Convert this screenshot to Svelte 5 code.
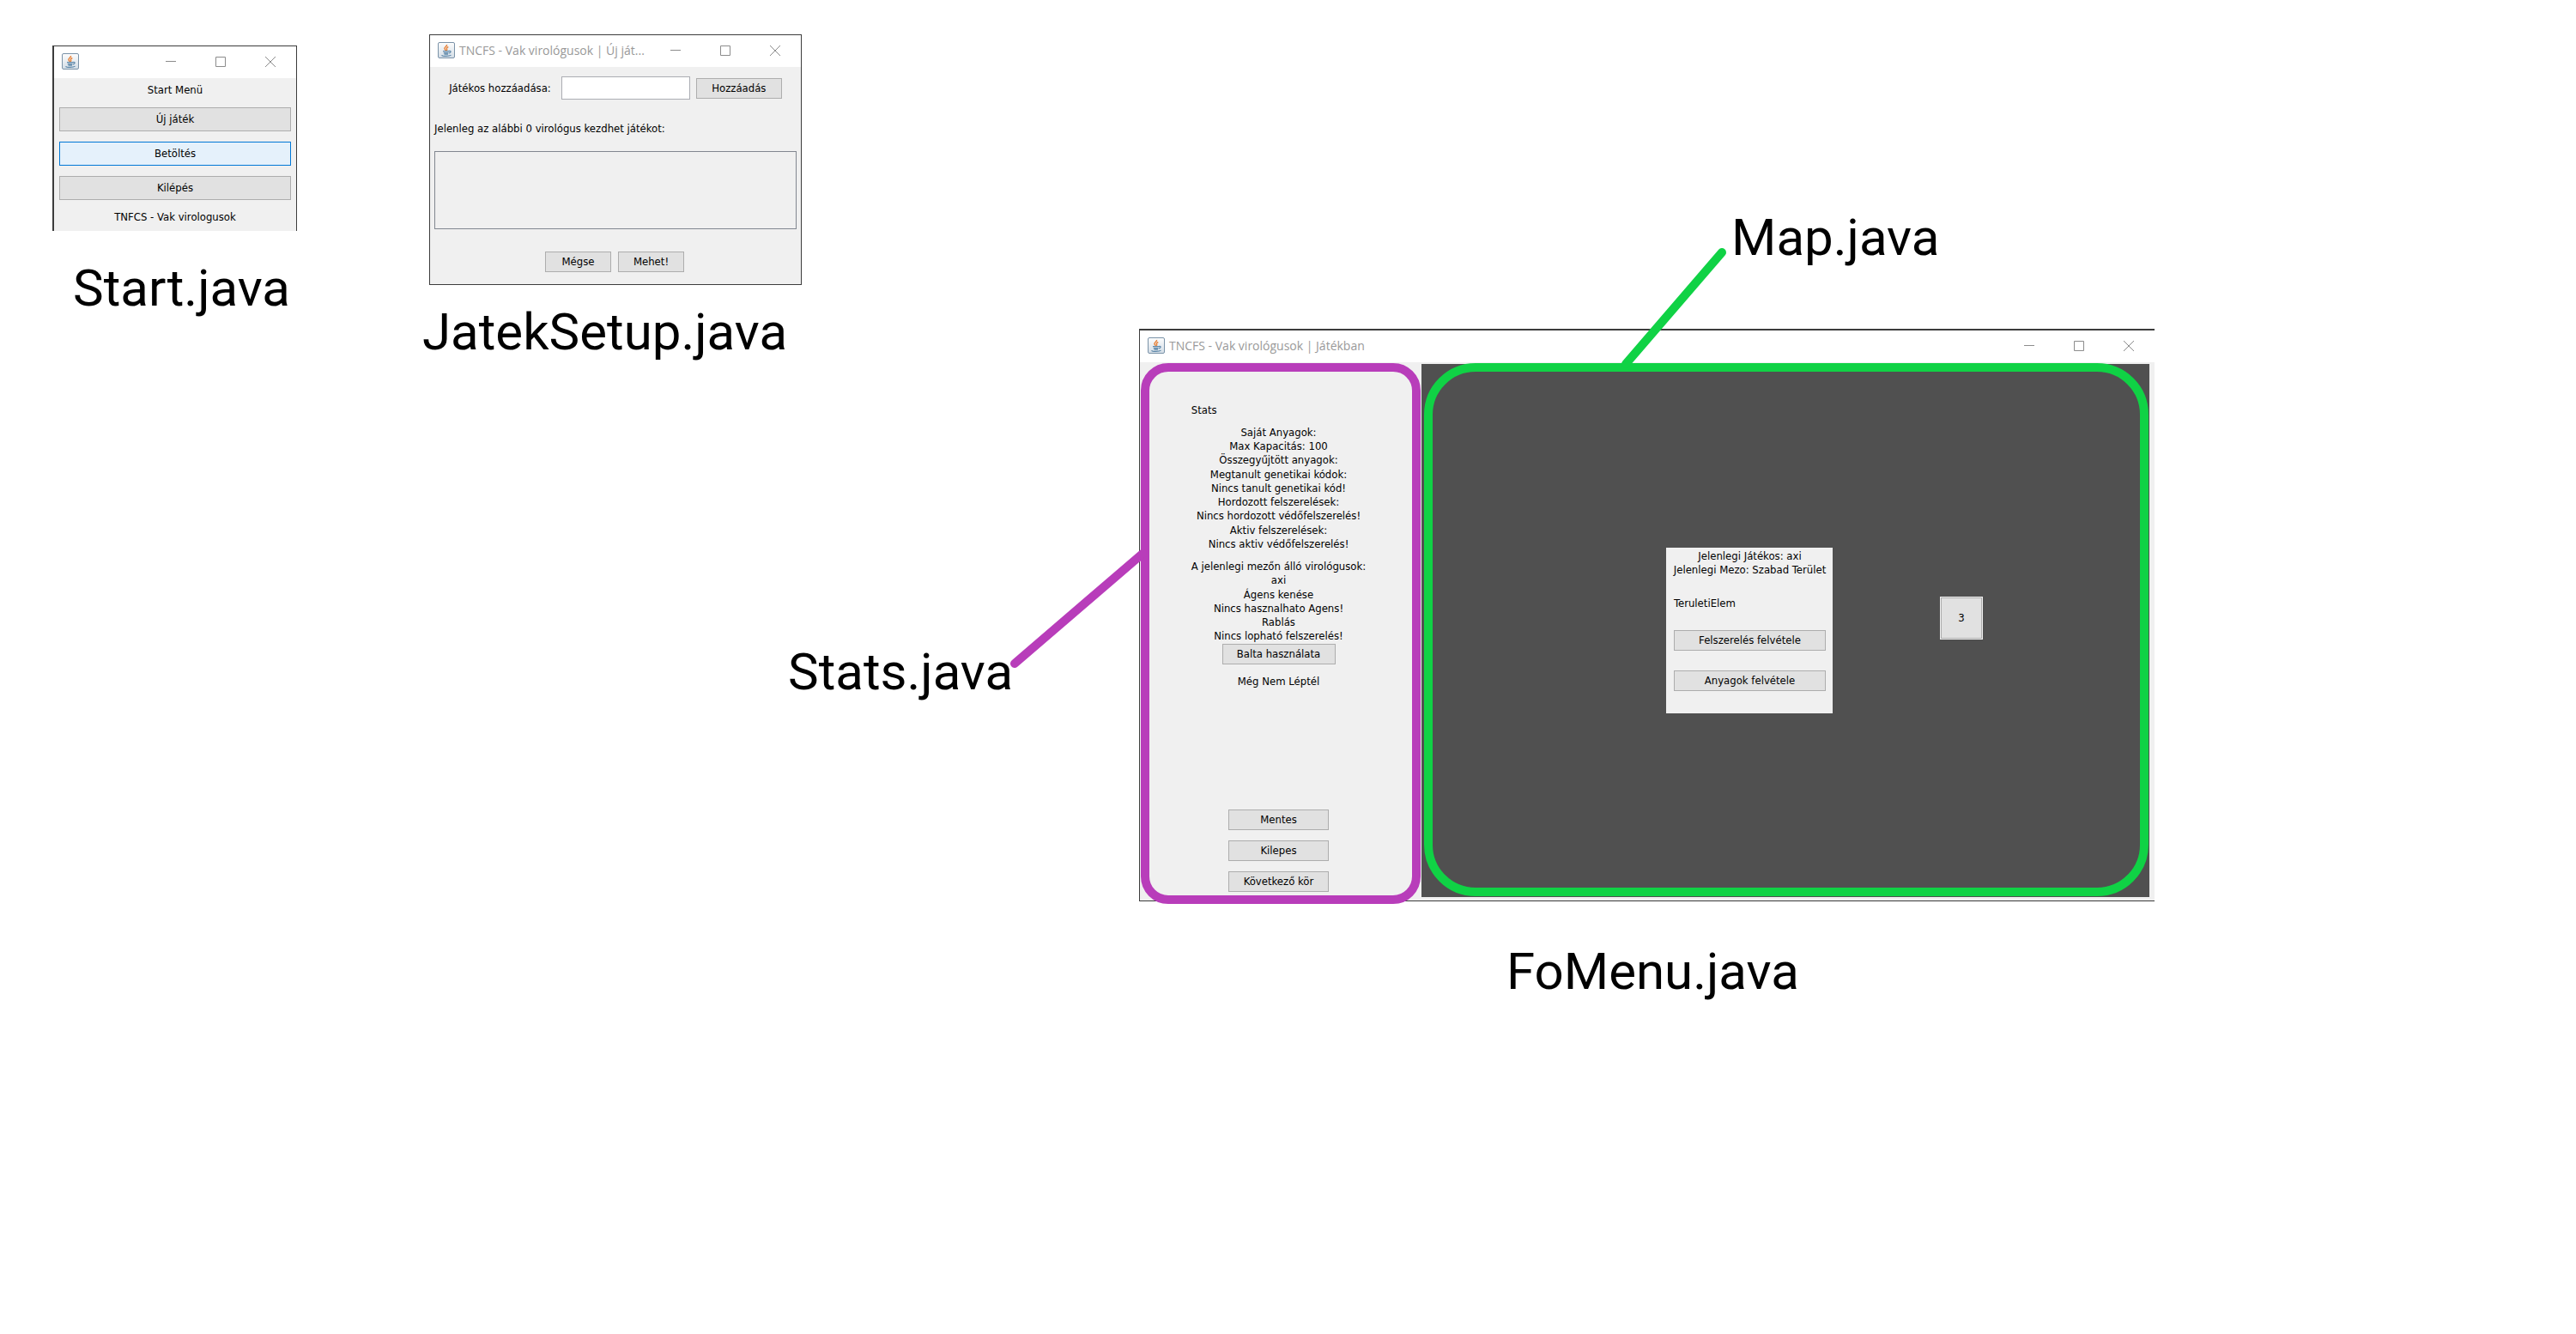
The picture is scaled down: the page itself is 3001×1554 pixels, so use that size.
<script>
  const sections = [
    [
      ['Saját Anyagok:', 'Max Kapacitás: 100', 'Összegyűjtött anyagok:'],
      ['Megtanult genetikai kódok:', 'Nincs tanult genetikai kód!', 'Hordozott felszerelések:', 'Nincs hordozott védőfelszerelés!'],
      ['Aktiv felszerelések:', 'Nincs aktiv védőfelszerelés!']
    ],
    [
      ['A jelenlegi mezőn álló virológusok:', 'axi'],
      ['Ágens kenése', 'Nincs hasznalhato Agens!', 'Rablás', 'Nincs lopható felszerelés!']
    ]
  ];
  let player = $state('');
</script>

{#snippet titlebar(title)}
  <header class="titlebar">
    <svg class="java" viewBox="0 0 20 20" aria-hidden="true">
      <defs>
        <linearGradient id="face" x1="0" y1="0" x2="0" y2="1">
          <stop offset="0" stop-color="#fdfdfd" />
          <stop offset="1" stop-color="#d3dde6" />
        </linearGradient>
      </defs>
      <rect x="0.5" y="0.5" width="19" height="18" rx="1.5" fill="url(#face)" stroke="#7b93a8" />
      <path d="M10.500 3c.8 1.700-3 2.800-2.600 4.700.2.900 1.100 1.400 1.500 2.100M12.300 5.500c-1.500.7-2.400 1.500-1.800 2.500.4.700.3 1.200-.2 1.800" fill="none" stroke="#e8843c" stroke-width="1.5" />
      <path d="M6 10.700h7.500M6.800 12.700h5.700M7.500 14.200h4.500M13.300 10.500c2.600-.5 2.200 2-.3 2.400M4.500 15.300c1 1.500 9 1.500 11-.2" fill="none" stroke="#5c86a8" stroke-width="1.2" />
    </svg>
    <span class="title">{title}</span>
    <div class="controls">
      <button aria-label="Minimize"><svg viewBox="0 0 12 12"><path d="M0 5.500H12" /></svg></button>
      <button aria-label="Maximize"><svg viewBox="0 0 12 12"><path d="M.5.5H11.500V11.500H.5Z" /></svg></button>
      <button aria-label="Close"><svg viewBox="0 0 12 12"><path d="M0 0 12 12M12 0 0 12" /></svg></button>
    </div>
  </header>
{/snippet}

<main class="board">
  <section class="window start">
    {@render titlebar('')}
    <div class="start-body">
      <p>Start Menü</p>
      <button class="btn">Új játék</button>
      <button class="btn active">Betöltés</button>
      <button class="btn">Kilépés</button>
      <p>TNFCS - Vak virologusok</p>
    </div>
  </section>
  <h2 class="caption cap-start">Start.java</h2>

  <section class="window setup">
    {@render titlebar('TNCFS - Vak virológusok | Új ját...')}
    <div class="setup-body">
      <form class="add" onsubmit={(e) => e.preventDefault()}>
        <label for="player">Játékos hozzáadása:</label>
        <input id="player" type="text" bind:value={player} />
        <button class="btn">Hozzáadás</button>
      </form>
      <p class="info">Jelenleg az alábbi 0 virológus kezdhet játékot:</p>
      <div class="list"></div>
      <div class="actions">
        <button class="btn">Mégse</button>
        <button class="btn">Mehet!</button>
      </div>
    </div>
  </section>
  <h2 class="caption cap-setup">JatekSetup.java</h2>

  <section class="window game">
    {@render titlebar('TNCFS - Vak virológusok | Játékban')}
    <div class="game-body">
      <aside class="stats">
        <div class="info-col">
          <h3>Stats</h3>
          {#each sections as section}
            <div class="section">
              {#each section as group}
                <div>
                  {#each group as line}<p>{line}</p>{/each}
                </div>
              {/each}
            </div>
          {/each}
        </div>
        <button class="btn axe">Balta használata</button>
        <p>Még Nem Léptél</p>
        <div class="menu">
          <button class="btn">Mentes</button>
          <button class="btn">Kilepes</button>
          <button class="btn">Következő kör</button>
        </div>
      </aside>
      <div class="map">
        <div class="field">
          <div class="heading">
            <p>Jelenlegi Játékos: axi</p>
            <p>Jelenlegi Mezo: Szabad Terület</p>
          </div>
          <p>TeruletiElem</p>
          <button class="btn">Felszerelés felvétele</button>
          <button class="btn">Anyagok felvétele</button>
        </div>
        <button class="btn node">3</button>
      </div>
    </div>
  </section>
  <h2 class="caption cap-game">FoMenu.java</h2>

  <div class="outline outline-stats"></div>
  <div class="outline outline-map"></div>
  <svg class="links" aria-hidden="true">
    <path d="M1182 773 1331 645" stroke="#b83dba" />
    <path d="M2006 294 1894 424" stroke="#10d245" />
  </svg>
  <h2 class="caption cap-stats">Stats.java</h2>
  <h2 class="caption cap-map">Map.java</h2>
</main>

<style>
  :global(body) { margin: 0; background: #fff; }
  .board {
    position: relative;
    min-height: 100vh;
    overflow: hidden;
    color: #000;
    font: 13px/16px "DejaVu Sans Condensed", "DejaVu Sans", sans-serif;
    font-stretch: condensed;
  }
  p, h2, h3 { margin: 0; font-weight: 400; font-size: inherit; }
  button { font: inherit; color: inherit; padding: 0; }

  .window {
    position: absolute;
    box-sizing: border-box;
    display: flex;
    flex-direction: column;
    border: 1px solid #3c3c3c;
    background: #f0f0f0;
  }
  .titlebar {
    box-sizing: border-box;
    display: flex;
    align-items: center;
    height: 37px;
    padding: 0 24px 1px 9px;
    background: #fff;
  }
  .java { width: 20px; height: 20px; flex: none; }
  .title {
    flex: 1;
    padding-left: 5px;
    white-space: nowrap;
    font: 14px/20px "Open Sans", "Noto Sans", sans-serif;
    color: #999;
  }
  .controls { display: flex; gap: 46px; }
  .controls button { display: flex; border: 0; background: none; }
  .controls svg { width: 12px; height: 12px; fill: none; stroke: #8c8c8c; }

  .btn {
    box-sizing: border-box;
    height: 24px;
    border: 1px solid #adadad;
    background: #e1e1e1;
  }
  .btn.active { border-color: #0078d7; background: #e5f1fb; }

  .start { left: 61px; top: 53px; width: 285px; border-left-width: 2px; border-bottom: 0; }
  .start-body {
    display: flex;
    flex-direction: column;
    gap: 12px;
    padding: 6px 6px 8px;
    text-align: center;
  }
  .start-body .btn { height: 28px; }

  .setup { left: 500px; top: 40px; width: 434px; }
  .setup-body { display: flex; flex-direction: column; padding: 11px 5px 14px; }
  .add { display: flex; align-items: center; justify-content: center; gap: 7px; }
  .add label { padding-right: 5px; }
  .add input {
    box-sizing: border-box;
    width: 150px;
    height: 27px;
    border: 1px solid #abadb3;
    background: #fff;
    font: inherit;
  }
  .add .btn { width: 100px; }
  .info { padding: 26px 0 18px; }
  .list { height: 89px; border: 1px solid #828790; }
  .actions { display: flex; justify-content: center; gap: 8px; padding: 26px 2px 0 0; }
  .actions .btn { width: 77px; }

  .game { left: 1327px; top: 383px; width: 1183px; height: 667px; border-top-width: 2px; border-right: 0; }
  .game-body { flex: 1; display: flex; padding: 2px 6px 4px 0; }
  .stats {
    box-sizing: border-box;
    width: 328px;
    padding: 46px 5px 6px 0;
    display: flex;
    flex-direction: column;
    align-items: center;
  }
  .info-col { display: flex; flex-direction: column; gap: 10px; text-align: center; }
  .info-col h3 { text-align: left; }
  .section { display: flex; flex-direction: column; gap: 1px; }
  .axe { width: 132px; margin: 1px 0 12px; }
  .menu { margin-top: auto; display: flex; flex-direction: column; gap: 12px; }
  .menu .btn { width: 117px; }

  .map { position: relative; flex: 1; background: #505050; }
  .field {
    position: absolute;
    left: 285px;
    top: 214px;
    box-sizing: border-box;
    width: 194px;
    display: flex;
    flex-direction: column;
    gap: 23px;
    padding: 2px 8px 26px 9px;
    background: #f0f0f0;
    white-space: nowrap;
  }
  .heading { display: flex; flex-direction: column; align-items: center; }
  .node {
    position: absolute;
    left: 605px;
    top: 272px;
    width: 48px;
    height: 48px;
    box-shadow: 0 0 0 1px #f0f0f0;
  }

  .caption {
    position: absolute;
    font: 60px/70px Roboto, sans-serif;
    white-space: nowrap;
  }
  .cap-start { left: 85px; top: 301px; }
  .cap-setup { left: 492px; top: 352px; }
  .cap-game { left: 1755px; top: 1097px; }
  .cap-stats { left: 918px; top: 748px; }
  .cap-map { left: 2017px; top: 242px; }

  .outline { position: absolute; box-sizing: border-box; border: 10px solid; pointer-events: none; }
  .outline-stats { left: 1329px; top: 423px; width: 326px; height: 630px; border-color: #b83dba; border-radius: 32px; }
  .outline-map { left: 1659px; top: 423px; width: 844px; height: 621px; border-color: #10d245; border-radius: 60px; }
  .links {
    position: absolute;
    inset: 0;
    width: 100%;
    height: 100%;
    fill: none;
    stroke-width: 10px;
    stroke-linecap: round;
    pointer-events: none;
  }
</style>
